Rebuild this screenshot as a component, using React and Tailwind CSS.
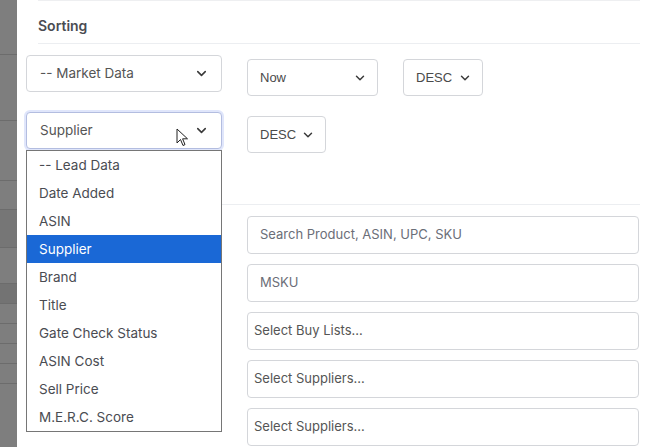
import React from 'react';
import { ChevronDown } from 'lucide-react';

const sortOptions = [
  '-- Lead Data',
  'Date Added',
  'ASIN',
  'Supplier',
  'Brand',
  'Title',
  'Gate Check Status',
  'ASIN Cost',
  'Sell Price',
  'M.E.R.C. Score',
];

const filters = [
  ['Search Product, ASIN, UPC, SKU', false],
  ['MSKU', false],
  ['Select Buy Lists...', true],
  ['Select Suppliers...', true],
  ['Select Suppliers...', true],
];

function SelectBox({ label, className = '', focused = false }) {
  return (
    <div
      className={`flex items-center justify-between h-[37px] rounded-[4px] border bg-white pl-[13px] pr-[12px] text-[13.5px] text-[#555] ${
        focused ? 'border-[#b3bde0] ring-2 ring-[#e0e6fb]' : 'border-[#d4d6da]'
      } ${className}`}
    >
      <span>{label}</span>
      <ChevronDown size={15} strokeWidth={2.5} className="text-[#3a3a3a]" />
    </div>
  );
}

function NativeSelect({ label, className = '' }) {
  return (
    <div
      className={`flex items-center justify-between h-[37px] rounded-[4px] border border-[#d4d6da] bg-white pl-[12px] pr-[10px] text-[13px] text-[#4a4a4a] font-['Liberation_Sans',Arial,sans-serif] ${className}`}
    >
      <span>{label}</span>
      <ChevronDown size={14} strokeWidth={2.5} className="text-[#3a3a3a]" />
    </div>
  );
}

function TextField({ placeholder, tight = false }) {
  return (
    <div
      className={`flex items-center h-[38px] rounded-[4px] border border-[#d4d6da] bg-white text-[13px] ${
        tight ? 'pl-[6px] text-[#555]' : 'pl-[12px] text-[#6b6e78]'
      }`}
    >
      {placeholder}
    </div>
  );
}

export default function App() {
  return (
    <div className="flex w-[648px] h-[447px] overflow-hidden font-['Inter','Noto_Sans',sans-serif]">
      {/* dimmed page behind the panel */}
      <div className="w-[17px] shrink-0 bg-[#7e7e7e] flex flex-col">
        <div className="h-[55px] border-b border-[#6c6c6c]" />
        <div className="h-[66px] border-b border-[#6c6c6c]" />
        <div className="h-[60px] border-b border-[#6c6c6c]" />
        <div className="h-[29px] border-b border-[#6c6c6c]" />
        <div className="h-[38px] border-b border-[#6c6c6c] bg-[#767676]" />
        <div className="h-[36px] border-b border-[#6c6c6c]" />
        <div className="h-[20px] border-b border-[#6c6c6c] bg-[#737373]" />
        <div className="h-[20px] border-b border-[#6c6c6c]" />
        <div className="h-[20px] border-b border-[#6c6c6c]" />
        <div className="h-[20px] border-b border-[#6c6c6c]" />
        <div className="h-[20px] border-b border-[#6c6c6c]" />
        <div className="flex-1" />
      </div>

      <div className="relative flex-1 bg-white">
        <div className="ml-[21px] mr-[8px] h-px bg-[#eeeff1]" />
        <div className="ml-[21px] mr-[8px] pt-[15px] pb-[7px] border-b border-[#eceef1] text-[14px] leading-[20px] font-semibold text-[#4a4c52]">
          Sorting
        </div>

        <div className="ml-[9px] mt-[11px] flex flex-col gap-[16px]">
          <div className="flex items-start gap-[25px]">
            <SelectBox label="-- Market Data" className="w-[196px]" />
            <div className="mt-[4px] flex gap-[25px]">
              <NativeSelect label="Now" className="w-[131px]" />
              <NativeSelect label="DESC" className="w-[80px]" />
            </div>
          </div>
          <div className="flex items-start gap-[25px]">
            <SelectBox label="Supplier" className="w-[196px]" focused />
            <div className="mt-[4px]">
              <NativeSelect label="DESC" className="w-[79px]" />
            </div>
          </div>
        </div>

        <div className="ml-[21px] mr-[8px] mt-[51px] h-px bg-[#eceef1]" />

        <div className="mt-[11px] ml-[230px] mr-[9px] flex flex-col gap-[10px]">
          {filters.map(([ph, tight], i) => (
            <TextField key={i} placeholder={ph} tight={tight} />
          ))}
        </div>

        {/* open list of the Supplier select */}
        <ul className="absolute left-[9px] top-[150px] w-[196px] border border-[#767676] bg-white text-[13.5px] text-[#4a4c52]">
          {sortOptions.map((opt) => (
            <li
              key={opt}
              className={`h-[28px] flex items-center pl-[12px] ${
                opt === 'Supplier' ? 'bg-[#1a68d6] text-white' : ''
              }`}
            >
              {opt}
            </li>
          ))}
        </ul>

        {/* mouse pointer */}
        <svg
          className="absolute left-[159px] top-[128px]"
          width="14"
          height="20"
          viewBox="0 0 14 20"
        >
          <path
            d="M1 1 L1 15 L4.5 11.5 L7 17.5 L9 16.6 L6.6 10.8 L11.5 10.8 Z"
            fill="#fff"
            stroke="#222"
            strokeWidth="1"
            strokeLinejoin="round"
          />
        </svg>
      </div>
    </div>
  );
}
